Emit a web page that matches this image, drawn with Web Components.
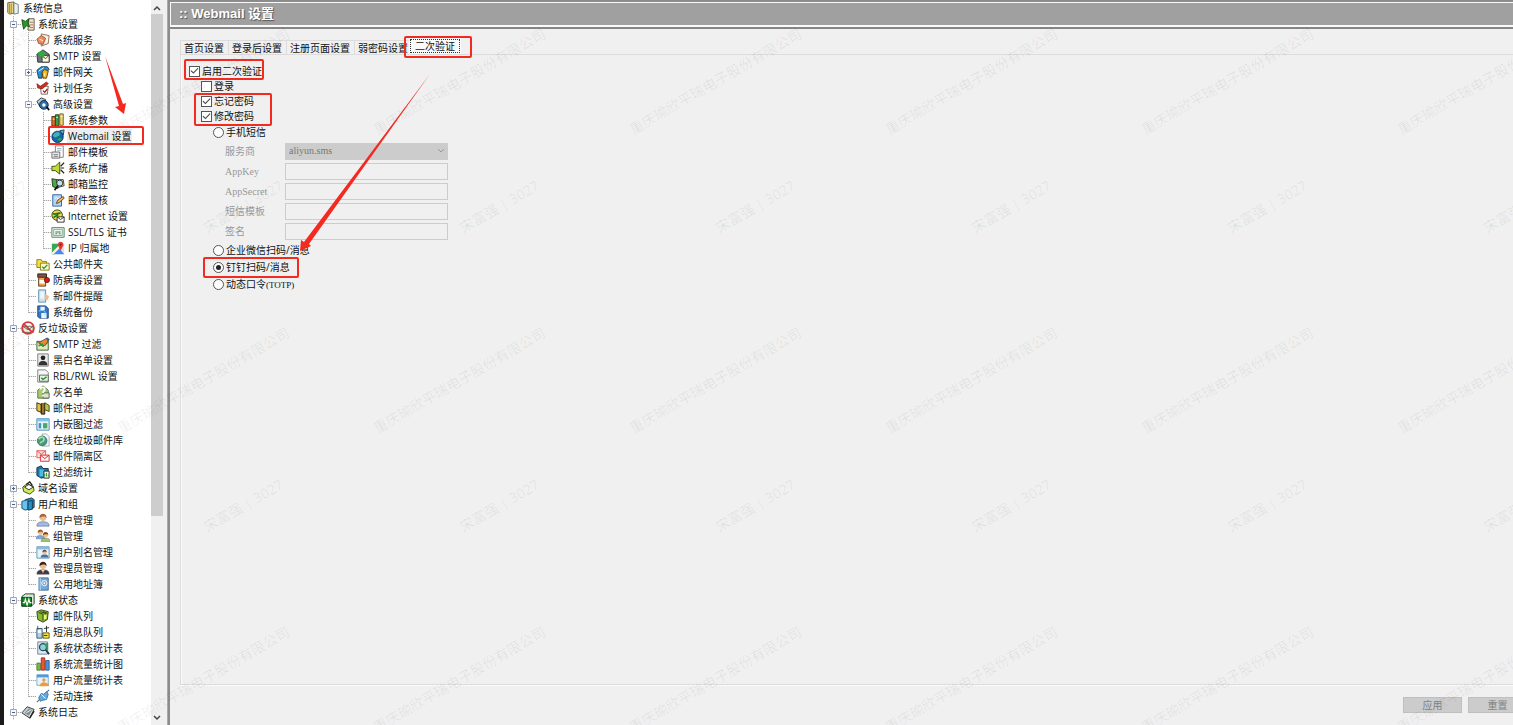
<!DOCTYPE html>
<html lang="zh-CN">
<head>
<meta charset="utf-8">
<title>Webmail 设置</title>
<style>
html,body{margin:0;height:100%;overflow:hidden}
body{background:#f0f0f0;color:#111;font:10px/16px "Open Sans","Noto Sans CJK SC",sans-serif}
</style>
</head>
<body>
<mail-admin></mail-admin>
<script>
const envelope = (c, f) => `<path d="M1 5h14v9H1z" fill="${f}" stroke="${c}"/><path d="M1 5l7 5 7-5" fill="none" stroke="${c}"/>`;
const person = (shirt, hair) => `<path d="M1 15c0-4 3-5 7-5s7 1 7 5z" fill="${shirt}" stroke="#556" stroke-width=".6"/><circle cx="8" cy="5.500" r="3.600" fill="#f0bd8c"/><path d="M4 6c-1-7 9-7 8 0-1-3-6-2-8 0z" fill="${hair}"/>`;
const ICONS = {
  book: '<path d="M2 2l7-1v13l-5 1-2-2z" fill="#e9d27a" stroke="#5a5a48"/><path d="M9 2l5 2v10l-5 1z" fill="#e9f0f1" stroke="#6c7474"/><path d="M4 3v11M6 3v11" stroke="#9b8841"/>',
  tools: '<path d="M9 2h6v13H8z" fill="#f5e6d2" stroke="#5d4b3c"/><path d="M1 3l4 2 4-3-1 5 2 4-4-1-3 4-1-5z" fill="#27992b" stroke="#11500f"/><path d="M10 6h4M10 9h4M10 12h4" stroke="#9a715c"/>',
  service: '<path d="M6 1l9 2-1 9-8 3z" fill="#f6e7d4" stroke="#8a6c57"/><path d="M1 7l5-4 5 3-3 7-5-1z" fill="#ee8a5a" stroke="#93533f"/><path d="M4 7l4 2M10 4l3 2-1 5" stroke="#fff" fill="none"/>',
  smtp: '<path d="M1 6l7-5 7 5v9H2z" fill="#6b767a" stroke="#263034"/><path d="M7 8l8-1v8H7z" fill="#fff8dc" stroke="#333"/><path d="M7 8l4 3 4-4" fill="none" stroke="#333"/><path d="M2 4l5-2 4 3-3 4-4-1z" fill="#2cae3b"/>',
  gateway: '<path d="M1 6l5-4h7l2 3-3 3H7v7H3z" fill="#2d8fd1" stroke="#14384f"/><path d="M7 8l3-3 4 2-2 8H8z" fill="#f4b51d" stroke="#5b3b02"/><path d="M3 7l6-4M10 9v4" stroke="#fff"/>',
  task: '<path d="M5 6h9l-1 9H6z" fill="#fff" stroke="#6d5a52"/><path d="M1 3l4 3 7-5 2 2-7 6-5-1z" fill="#d42f1e" stroke="#681307" stroke-width=".7"/><path d="M8 11l2 2 3-4" fill="none" stroke="#8b1f13" stroke-width="1.500"/>',
  advanced: '<path d="M1 5l5-4 5 2v8l-6 1z" fill="#b9c9da" stroke="#233"/><circle cx="9" cy="9" r="5" fill="#2c6fa9" stroke="#10273c"/><circle cx="9" cy="9" r="2" fill="#fff"/><path d="M12 11l3 4" stroke="#111" stroke-width="2"/>',
  params: '<path d="M1 4h4v11H1z" fill="#df6a2c" stroke="#4a2610"/><path d="M5 2h4v13H5z" fill="#3d9c47" stroke="#1c3f20"/><path d="M10 1h4v13h-4z" fill="#f0d47a" stroke="#6b5318"/><path d="M2 7h2M6 5h2M11 4h2" stroke="#fff"/>',
  webmail: '<circle cx="7.500" cy="9" r="6.500" fill="#1565b3" stroke="#0d355c"/><path d="M2 7c4-5 8-4 8-1s-4 2-4 4c-2-1-3-1-4-3z" fill="#3fb4b0"/><path d="M10 2l5-1-1 6c-1-2-2-4-4-5z" fill="#54c1d8" stroke="#136"/><path d="M7 12c2-2 4-2 6-1-1 2-4 4-6 1z" fill="#2da24a"/>',
  template: '<path d="M5 1h9v13H5z" fill="#fff" stroke="#777"/><path d="M7 4h5M7 6h5" stroke="#9ab"/><path d="M1 8h9v7H1z" fill="#e8e8e8" stroke="#666"/><path d="M3 11h5M3 13h5" stroke="#777"/>',
  speaker: '<path d="M1 6h4l5-5v14l-5-4H1z" fill="#c2d93a" stroke="#34440e"/><path d="M11 6l4-4M11 8h4M11 10l4 4" stroke="#222" stroke-width="1.300"/>',
  monitor: '<path d="M1 2l6 1 1 10-6-2z" fill="#4fa749" stroke="#153e17"/><path d="M6 3h8l1 7-7 2z" fill="#f5edb8" stroke="#333"/><circle cx="10" cy="7" r="3.500" fill="#bfe2ee" stroke="#222"/><path d="M8 10l-4 5" stroke="#111" stroke-width="2"/>',
  sign: '<path d="M2 2h10v13H2z" fill="#b6d4f3" stroke="#285b91"/><path d="M4 7l2-2 2 2 2-2" stroke="#fff" fill="none"/><path d="M6 12l2-4 6-4 1 2-6 5z" fill="#f3c766" stroke="#573d14"/>',
  internet: '<circle cx="7" cy="7" r="6" fill="#f0d83d" stroke="#383500"/><path d="M2 5c4 3 6-2 9 0M3 10c2-3 5-1 5-5" stroke="#167b2a" stroke-width="2" fill="none"/><path d="M7 9h8v6H7z" fill="#fff" stroke="#222"/><path d="M7 9l4 3 4-3" fill="none" stroke="#222"/>',
  ssl: '<path d="M1 3h14v11H1z" fill="#eaf6e8" stroke="#47785b"/><path d="M3 5h10v7H3z" fill="none" stroke="#82ad8d"/><path d="M5 8h6M5 10h2M9 10h2" stroke="#335f75"/>',
  map: '<path d="M1 3h14v12H1z" fill="#ddd"/><path d="M1 3h7l4 4-8 8H1z" fill="#34a853"/><path d="M2 15l7-7 6 7z" fill="#4285f4"/><path d="M1 13l8-8 2 2-8 8H1z" fill="#f4efe0"/><path d="M11 1a3 3 0 013 4l-3 6-3-6a3 3 0 013-4z" fill="#e33a2d"/><circle cx="11" cy="4" r="1" fill="#721"/>',
  folders: '<path d="M1 3h5l1 2h5v7H1z" fill="#f5e247" stroke="#927100"/><path d="M5 7h10v8H5z" fill="#fff8c9" stroke="#857012"/><path d="M7 11l2 2 4-4" fill="none" stroke="#159527" stroke-width="1.500"/>',
  virus: '<path d="M2 1h10v4H2z" fill="#7a5744" stroke="#241a14"/><path d="M3 5h8v10H3z" fill="#f3a745" stroke="#563511"/><path d="M4 8h6v4H4z" fill="#fff"/><circle cx="12.500" cy="8" r="3" fill="#d81a14" stroke="#400" stroke-width=".7"/>',
  remind: '<path d="M3 1h8v14H3z" fill="#c8e4f8" stroke="#65889f"/><path d="M5 3h4v8H5z" fill="#edf7fc"/><path d="M10 6l5 2-2 5-3-2z" fill="#f5ba82"/>',
  backup: '<path d="M2 1h9l3 3v11H4L2 13z" fill="#3478c6" stroke="#163e75"/><path d="M5 2h5v4H5zM6 9h6v6H6z" fill="#e9f3fb"/><path d="M3 7c6-2 9 0 7 5" fill="none" stroke="#9cd2fb"/>',
  spam: '<path d="M2 6h12v7H2z" fill="#f4eedb" stroke="#555"/><path d="M2 6l6 4 6-4" fill="none" stroke="#555"/><circle cx="8" cy="8" r="6.800" fill="none" stroke="#d83a3a" stroke-width="2"/><path d="M3 3l10 10" stroke="#d83a3a" stroke-width="2"/>',
  smtpfilter: '<path d="M1 5h13v10H1z" fill="#dcebc2" stroke="#3b5420"/><path d="M1 5l7 6 6-5" fill="none" stroke="#3b5420"/><path d="M4 6l9-5 2 2-5 7-4-1z" fill="#ed8a2d" stroke="#553"/><path d="M3 10l5-2" stroke="#279834" stroke-width="2"/><path d="M11 1l4 1-1 4z" fill="#28609a"/>',
  listing: '<path d="M2 1h12v14H2z" fill="#e8eaeb" stroke="#777"/><circle cx="8" cy="5.500" r="2.700" fill="#222"/><path d="M3 14c0-4 2-5 5-5s5 1 5 5z" fill="#333"/>',
  rbl: '<path d="M2 1h9l3 3v11H2z" fill="#f7f7f7" stroke="#777"/><path d="M4 7h10v7H4z" fill="#e9f3e7" stroke="#456c4d"/><path d="M6 10l2 2 4-3" fill="none" stroke="#208527" stroke-width="1.500"/>',
  gray: '<path d="M2 6l6-5 6 5v9H2z" fill="#a7cd70" stroke="#566b35"/><path d="M8 9h7v6H8z" fill="#dbe3d0" stroke="#555"/><path d="M5 5c0-3 5-3 5 0 0 2-2 2-2 4" fill="none" stroke="#fff" stroke-width="2"/><path d="M8 11v2" stroke="#fff" stroke-width="2"/>',
  mailfilter: '<path d="M1 2l5 2v9l-5-2z" fill="#e1c547" stroke="#292409"/><path d="M6 3h4v12H6z" fill="#734d2d" stroke="#241609"/><path d="M10 2l5 3v7l-5-2z" fill="#b7c94b" stroke="#32380b"/><path d="M8 2v12" stroke="#e0a03a"/>',
  embed: '<path d="M1 2h14v13H1z" fill="#eaf5fb" stroke="#397da9"/><path d="M1 2h14v3H1z" fill="#7cc5e5"/><path d="M3 7h3v6H3z" fill="#3b98c6"/><path d="M8 7h5v6H8z" fill="#49a86a"/>',
  online: '<path d="M7 1h5l3 3v11H7z" fill="#f2f4f6" stroke="#a2aab2"/><circle cx="7" cy="9" r="5.500" fill="#479b72" stroke="#377087"/><path d="M3 7c3-4 7-2 6 1s-4 1-4 4" fill="none" stroke="#a5dcad" stroke-width="2"/>',
  quarantine: '<path d="M1 2h10v8H1z" fill="#ffdede" stroke="#e05050"/><path d="M1 2l5 4 5-4" fill="none" stroke="#e05050"/><path d="M5 7h10v7H5z" fill="#fff0f0" stroke="#d42127"/><path d="M5 7l5 4 5-4" stroke="#d42127" fill="none"/>',
  stats: '<path d="M1 3l5-2 2 3h6v9l-8 2-5-3z" fill="#2574a8" stroke="#092d45"/><path d="M4 5h5v8H4z" fill="#49bdea"/><path d="M9 7h6v8H9z" fill="#f6f1cf" stroke="#222"/><path d="M10 13v-3M12 13V9M14 13v-2" stroke="#159030"/>',
  domain: '<path d="M2 7l5-4 7 3 1 5-5 4-7-3z" fill="#cfed58" stroke="#34400c"/><path d="M4 7l5-3 5 3-5 3z" fill="#fff" stroke="#222"/><path d="M6 4l4-3 3 4" fill="none" stroke="#1c2610" stroke-width="1.500"/>',
  group: '<path d="M5 3l7-2 3 2v9l-5 2z" fill="#288ac9" stroke="#09334d"/><path d="M1 5l7-2v11l-3 1-4-2z" fill="#65c3ee" stroke="#164665"/><path d="M8 5l5-1v10l-5 1z" fill="#298dc6" stroke="#13374b"/>',
  user: person('#9bbdeb','#a06538'),
  users: '<g transform="translate(-1 0) scale(.75)">' + person('#78a8e0','#9a5e22') + '</g><g transform="translate(5 3) scale(.75)">' + person('#97c866','#7c481b') + '</g>',
  alias: '<path d="M1 2h14v13H1z" fill="#e5f3fb" stroke="#5b8da9"/><path d="M1 2h14v3H1z" fill="#88bbdf"/><g transform="translate(5 5) scale(.6)">' + person('#3f76ad','#60401f') + '</g>',
  admin: person('#3c3c42','#3a2418') + '<path d="M6 10l2 4 2-4z" fill="#fff"/><path d="M8 11v4" stroke="#c21f1f"/>',
  address: '<path d="M3 1h11v14H3z" fill="#79a8d6" stroke="#386793"/><path d="M3 1v14M5 1v14" stroke="#b8d2eb"/><circle cx="9.500" cy="7" r="3" fill="none" stroke="#fff"/><circle cx="9.500" cy="7" r="1" fill="#fff"/>',
  status: '<path d="M1 4l4-3h10v11l-3 3H1z" fill="#dfe8dc" stroke="#07360f"/><path d="M1 5h11v10H1z" fill="#168a26" stroke="#07360f"/><path d="M2 11h2l1-4 2 7 2-7 1 4h2" fill="none" stroke="#fff" stroke-width="1.200"/>',
  queue: '<path d="M1 3l5-2 8 2-1 9-5 3-6-3z" fill="#87bb34" stroke="#243b0b"/><path d="M3 4l5 2v7M5 3l6 2v7M8 3l5 2" stroke="#263a10" fill="none"/><path d="M9 7l3-1v5l-3 1z" fill="#fbf47f"/>',
  sms: '<path d="M2 1v4M1 4h6v11H1z" fill="#b4d0e5" stroke="#285070"/><path d="M2 6h4v3H2z" fill="#fff"/><path d="M8 9h7v6H8z" fill="#f4e842" stroke="#4f4b0b"/><path d="M9 12h4M12 1v7M9 4l6-1" stroke="#222"/>',
  report: '<path d="M2 1h11v14H2z" fill="#dcebf3" stroke="#64798a"/><circle cx="8" cy="7" r="4" fill="#8fd3d1" stroke="#224a68" stroke-width="1.500"/><path d="M11 10l4 5" stroke="#153350" stroke-width="2"/><path d="M10 3l4-1v11z" fill="#2f9d53"/>',
  bars: '<path d="M1 7h4v8H1z" fill="#7abb4c" stroke="#477b29"/><path d="M6 1h4v14H6z" fill="#ef5436" stroke="#9c2b17"/><path d="M11 4h4v11h-4z" fill="#4b94d5" stroke="#2d5e90"/>',
  userflow: '<path d="M1 2h13v12H1z" fill="#e8f3fc" stroke="#70a8d7"/><path d="M1 2h13v3H1z" fill="#5199d9"/><circle cx="9" cy="8" r="2" fill="#dc9d54"/><path d="M4 15c1-5 7-6 11-1v1z" fill="#ed9b3e"/>',
  link: '<path d="M1 15l4-4M11 5l4-4" stroke="#527ca1" stroke-width="1.500"/><path d="M3 10l3-5 3 1 3-3 2 3-2 6-5 1-2 1z" fill="#65a9db" stroke="#3b6f9f"/><path d="M6 6l5 5" stroke="#fff"/>',
  log: '<path d="M1 9l6-7 8 3-5 10z" fill="#cbd0d3" stroke="#252a2d"/><path d="M4 9l5-5 4 1-4 7z" fill="#808b92"/><path d="M6 9l6-4" stroke="#fff"/><path d="M10 15l5-8" stroke="#222" stroke-width="1.500"/>'
};

const TREE = [
 [0,'book','系统信息'],[1,'tools','系统设置','-'],[2,'service','系统服务'],[2,'smtp','SMTP 设置'],[2,'gateway','邮件网关','+'],[2,'task','计划任务'],[2,'advanced','高级设置','-'],
 [3,'params','系统参数'],[3,'webmail','Webmail 设置','',1],[3,'template','邮件模板'],[3,'speaker','系统广播'],[3,'monitor','邮箱监控'],[3,'sign','邮件签核'],[3,'internet','Internet 设置'],[3,'ssl','SSL/TLS 证书'],[3,'map','IP 归属地'],
 [2,'folders','公共邮件夹'],[2,'virus','防病毒设置'],[2,'remind','新邮件提醒'],[2,'backup','系统备份'],[1,'spam','反垃圾设置','-'],[2,'smtpfilter','SMTP 过滤'],[2,'listing','黑白名单设置'],[2,'rbl','RBL/RWL 设置'],[2,'gray','灰名单'],[2,'mailfilter','邮件过滤'],[2,'embed','内嵌图过滤'],[2,'online','在线垃圾邮件库'],[2,'quarantine','邮件隔离区'],[2,'stats','过滤统计'],
 [1,'domain','域名设置','+'],[1,'group','用户和组','-'],[2,'user','用户管理'],[2,'users','组管理'],[2,'alias','用户别名管理'],[2,'admin','管理员管理'],[2,'address','公用地址簿'],[1,'status','系统状态','-'],[2,'queue','邮件队列'],[2,'sms','短消息队列'],[2,'report','系统状态统计表'],[2,'bars','系统流量统计图'],[2,'userflow','用户流量统计表'],[2,'link','活动连接'],[1,'log','系统日志','-']
];

class Base extends HTMLElement {
  mount(html) { this.attachShadow({mode:'open'}).innerHTML = html; }
}

customElements.define('tree-node', class extends Base {
  connectedCallback() {
    const level = +this.getAttribute('level'), exp = this.getAttribute('expander'), last = this.hasAttribute('last');
    let cells = '';
    for (let i = 1; i <= level; i++) {
      const own = i === level;
      cells += `<span class="cell ${own ? 'own' : ''} ${own && last ? 'last' : ''}">${own && exp ? `<button aria-label="${exp === '-' ? '收起' : '展开'}"><svg width="9" height="9"><path d="M1.500 1.500h6v6h-6z" fill="#f6f8fb" stroke="#a4a8b0"/><path d="M3 4.500h3${exp === '+' ? 'M4.500 3v3' : ''}" stroke="#4a5f96"/></svg></button>` : ''}</span>`;
    }
    this.mount(`<style>
      :host{display:flex;height:16px;align-items:center;padding-left:6px;white-space:nowrap}
      .cell{width:15px;height:16px;flex:none;display:grid;place-items:center;background:repeating-linear-gradient(#a8a8a8 0 1px,#e6e6e6 1px 2px) 7px 0/1px 100% no-repeat}
      .own{background:repeating-linear-gradient(#a8a8a8 0 1px,#e6e6e6 1px 2px) 7px 0/1px 100% no-repeat,repeating-linear-gradient(90deg,#a8a8a8 0 1px,#e6e6e6 1px 2px) 8px 8px/7px 1px no-repeat}
      .last{background-size:1px 9px,7px 1px}
      button{border:0;padding:0;background:none;width:9px;height:9px;display:block}
      button svg{display:block}
      .icon{width:14px;height:14px;flex:none;margin-right:2px}
      a{color:#111;text-decoration:none;padding:0 1px;line-height:14px}
      :host([selected]) a{background:#eee}
    </style>${cells}<svg class="icon" viewBox="0 0 16 16">${ICONS[this.getAttribute('icon')]}</svg><a href="#"><slot></slot></a>`);
  }
});

customElements.define('nav-tree', class extends Base {
  connectedCallback() {
    const rows = TREE.map(([l,i,t,e,s], n) => {
      let last = l > 1;
      for (let k = n + 1; k < TREE.length && TREE[k][0] >= l; k++) if (TREE[k][0] === l) { last = false; break; }
      return `<tree-node level="${l}" icon="${i}" ${e ? `expander="${e}"` : ''} ${last ? 'last' : ''} ${s ? 'selected' : ''}>${t}</tree-node>`;
    }).join('');
    this.mount(`<style>
      :host{display:flex;background:#fff;border-left:4px solid #1c1a1c;box-sizing:border-box;overflow:hidden;width:163px;flex:none}
      nav{flex:1;min-width:0;overflow:hidden;margin-left:-4px}
      .bar{width:12px;flex:none;background:#f0f0f0;display:flex;flex-direction:column}
      .bar svg{display:block;flex:none}
      .track{flex:1}.thumb{height:72%;background:#cdcdcd}
    </style><nav aria-label="系统菜单">${rows}</nav>
    <div class="bar"><svg width="12" height="14"><path d="M3 10l3-3 3 3" fill="none" stroke="#444" stroke-width="1.500"/></svg><div class="track"><div class="thumb"></div></div><svg width="12" height="14"><path d="M3 5l3 3 3-3" fill="none" stroke="#444" stroke-width="1.500"/></svg></div>`);
  }
});

customElements.define('title-bar', class extends Base {
  connectedCallback() {
    this.mount(`<style>
      :host{display:block;border-top:2px solid #8c8c8c;border-bottom:2px solid #858585;padding:1px 0 2px 1px;background:#fafafa}
      h1{margin:0;background:#a0a0a0;color:#fff;font:bold 13px/22px "Liberation Sans","Noto Sans CJK SC",sans-serif;padding-left:8px;text-shadow:1px 1px 1px #555}
    </style><h1>:: <slot></slot></h1>`);
  }
});

customElements.define('tab-strip', class extends Base {
  connectedCallback() {
    this.mount(`<style>
      :host{display:flex;height:14px;align-items:flex-end}
      button{height:14px;border:solid #dcdcdc;border-width:1px 0 0 1px;padding:1px 4px 0 3px;background:#f0f0f0;font:inherit;line-height:13px;color:#111;white-space:nowrap}
      .on{height:16px;line-height:12px;background:#fafafa;border:1px solid #fafafa;padding:0 1px;margin-left:-3px}
      .on span{display:block;outline:1px dotted #333;padding:0 4px}
    </style><button>首页设置</button><button>登录后设置</button><button>注册页面设置</button><button>弱密码设置</button><button class="on"><span>二次验证</span></button>`);
  }
});

customElements.define('choice-item', class extends Base {
  connectedCallback() {
    const type = this.getAttribute('type');
    this.mount(`<style>
      :host{display:flex;align-items:center;height:15px}
      label{display:flex;align-items:center;gap:2px;line-height:15px;white-space:nowrap}
      input{appearance:none;margin:0;width:11px;height:11px;box-sizing:border-box;border:1px solid #555;background:#fff;display:grid;place-items:center}
      input[type=radio]{border-radius:50%}
      input:checked::before{content:"";width:9px;height:9px;background:#444;clip-path:polygon(6% 50%,14% 42%,38% 64%,86% 14%,94% 22%,38% 80%)}
      input[type=radio]:checked::before{width:5px;height:5px;background:#222;border-radius:50%;clip-path:none}
      ::slotted(small){font:9px/15px "Liberation Serif",serif}
    </style><label><input type="${type}" ${this.hasAttribute('checked') ? 'checked' : ''}><span><slot></slot></span></label>`);
    if (type === 'radio') {
      const input = this.shadowRoot.querySelector('input');
      input.addEventListener('change', () => {
        for (const o of this.parentNode.querySelectorAll('choice-item[type=radio]')) if (o !== this) o.shadowRoot.querySelector('input').checked = false;
      });
    }
  }
});

customElements.define('form-field', class extends Base {
  connectedCallback() {
    const value = this.getAttribute('select');
    this.mount(`<style>
      :host{display:flex;align-items:center;height:20px;color:#999}
      label{width:60px;flex:none}
      ::slotted(small){font:10px/16px "Liberation Serif",serif}
      input,select{appearance:none;box-sizing:border-box;width:163px;height:17px;margin:0;border:1px solid #ccc;border-radius:0;background:#f0f0f0;padding:0 3px;font:10px/14px "Liberation Serif",serif;color:#777;opacity:1}
      .wrap{display:grid}.wrap>*{grid-area:1/1}
      select{background:#ccc}
      svg{justify-self:end;align-self:center;margin-right:3px;pointer-events:none}
    </style><label for="f"><slot></slot></label>${value ? `<span class="wrap"><select id="f" disabled><option>${value}</option></select><svg width="8" height="6"><path d="M1 1l3 3 3-3" fill="none" stroke="#999"/></svg></span>` : '<input id="f" disabled>'}`);
  }
});

customElements.define('verify-pane', class extends Base {
  connectedCallback() {
    this.mount(`<style>
      :host{display:block;border:solid #dcdcdc;border-width:1px 0 1px 1px;box-shadow:inset 1px 0 #fafafa,0 1px #fafafa;padding:8px 0 0 8px;box-sizing:border-box}
      .top{height:16px}.sub{padding-left:12px}.methods{padding-left:12px}
      [type=radio]{height:17px}
      .fields{padding:0 0 1px 12px}
    </style>
    <choice-item class="top" type="checkbox" checked>启用二次验证</choice-item>
    <div class="sub">
      <choice-item type="checkbox">登录</choice-item>
      <choice-item type="checkbox" checked>忘记密码</choice-item>
      <choice-item type="checkbox" checked>修改密码</choice-item>
      <div class="methods">
        <choice-item type="radio">手机短信</choice-item>
        <div class="fields">
          <form-field select="aliyun.sms">服务商</form-field>
          <form-field><small>AppKey</small></form-field>
          <form-field><small>AppSecret</small></form-field>
          <form-field>短信模板</form-field>
          <form-field>签名</form-field>
        </div>
        <choice-item type="radio">企业微信扫码/消息</choice-item>
        <choice-item type="radio" checked>钉钉扫码/消息</choice-item>
        <choice-item type="radio">动态口令<small>(TOTP)</small></choice-item>
      </div>
    </div>`);
  }
});

customElements.define('action-bar', class extends Base {
  connectedCallback() {
    this.mount(`<style>
      :host{display:flex;justify-content:flex-end;gap:6px;margin-right:-14px;padding:12px 0}
      button{width:59px;height:16px;border:1px solid #bfbfbf;background:#ccc;color:#838383;font:inherit;line-height:14px;padding:0}
    </style><button disabled>应用</button><button disabled>重置</button>`);
  }
});

customElements.define('water-mark', class extends Base {
  connectedCallback() {
    this.mount(`<style>
      :host{position:absolute;inset:0;overflow:hidden;pointer-events:none}
      svg{display:block;width:100%;height:100%}
      text{font:14px "Open Sans","Noto Sans CJK SC",sans-serif;fill:#000;fill-opacity:.07;text-anchor:middle}
    </style><svg aria-hidden="true"></svg>`);
    const svg = this.shadowRoot.querySelector('svg');
    let out = '';
    for (let y = 86; y < innerHeight + 100; y += 299)
      for (let x = -50; x < innerWidth + 100; x += 256)
        out += `<text transform="translate(${x} ${y}) rotate(-30)">重庆瑜欣平瑞电子股份有限公司</text><text transform="translate(${x + 40} ${y + 125}) rotate(-30)">宋富强 | 3027</text>`;
    svg.innerHTML = out;
  }
});

customElements.define('red-marks', class extends Base {
  connectedCallback() {
    this.mount(`<style>
      :host{position:absolute;inset:0;pointer-events:none}
      svg{display:block;width:100%;height:100%}
    </style><svg aria-hidden="true">
      <g fill="none" stroke="#f32a20" stroke-width="2">
        <rect x="49" y="127" width="94" height="17" rx="1"/><rect x="185" y="60" width="78" height="19" rx="1"/>
        <rect x="195" y="94" width="76" height="31" rx="1"/><rect x="405" y="37" width="66" height="20" rx="1"/>
        <rect x="204" y="258" width="94" height="19" rx="1"/>
      </g>
      <g fill="#f32a20"><path d="M105 56L123 104L126 103L124 114L115 107L119 106Z"/><path d="M430 74L309 244L311 246L300 251L301 240L304 242Z"/></g>
    </svg>`);
  }
});

customElements.define('mail-admin', class extends Base {
  connectedCallback() {
    this.mount(`<style>
      :host{position:relative;display:flex;height:100vh;overflow:hidden}
      nav-tree{height:100%}
      .split{width:5px;flex:none;background:#f0f0f0;border-right:1px solid #aaa;box-sizing:border-box}
      main{flex:1;min-width:0;display:flex;flex-direction:column;border-left:2px solid #8c8c8c;overflow:hidden}
      tab-strip{margin:11px 0 0 10px}
      verify-pane{flex:1;margin-left:10px}
    </style>
    <nav-tree></nav-tree><div class="split"></div>
    <main><title-bar>Webmail 设置</title-bar><tab-strip></tab-strip><verify-pane></verify-pane><action-bar></action-bar></main>
    <water-mark></water-mark><red-marks></red-marks>`);
  }
});
</script>
</body>
</html>
